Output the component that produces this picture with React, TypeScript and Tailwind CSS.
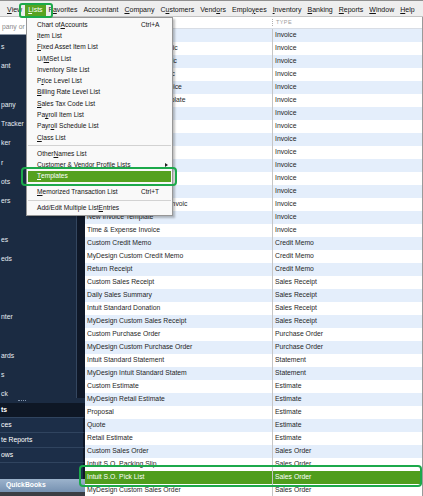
import React from "react";

// mnemonic label: underline one char like a Windows menu
function Mn({ t, u }: { t: string; u?: number }) {
  if (u === undefined || u < 0) return <>{t}</>;
  return (
    <>
      {t.slice(0, u)}
      <span className="underline decoration-[0.5px] underline-offset-[1px]">{t[u]}</span>
      {t.slice(u + 1)}
    </>
  );
}

const menubar: [string, number][] = [
  ["View", 0],
  ["Lists", 0],
  ["Favorites", 1],
  ["Accountant", -1],
  ["Company", 0],
  ["Customers", 1],
  ["Vendors", 4],
  ["Employees", 5],
  ["Inventory", 0],
  ["Banking", 0],
  ["Reports", 0],
  ["Window", 0],
  ["Help", 0],
];

type MenuItem =
  | { t: string; u?: number; k?: string; sub?: boolean; hl?: boolean }
  | "sep";

const listsMenu: MenuItem[] = [
  { t: "Chart of Accounts", u: 9, k: "Ctrl+A" },
  { t: "Item List", u: 0 },
  { t: "Fixed Asset Item List", u: 0 },
  { t: "U/M Set List", u: 2 },
  { t: "Inventory Site List" },
  { t: "Price Level List", u: 1 },
  { t: "Billing Rate Level List", u: 0 },
  { t: "Sales Tax Code List", u: 0 },
  { t: "Payroll Item List", u: 2 },
  { t: "Payroll Schedule List", u: 4 },
  { t: "Class List", u: 0 },
  "sep",
  { t: "Other Names List", u: 6 },
  { t: "Customer & Vendor Profile Lists", sub: true },
  { t: "Templates", u: 0, hl: true },
  "sep",
  { t: "Memorized Transaction List", u: 0, k: "Ctrl+T" },
  "sep",
  { t: "Add/Edit Multiple List Entries", u: 23 },
];

const rows: [string, string][] = [
  ["Finance Charge", "Invoice"],
  ["MyDesign Intuit Product Basic", "Invoice"],
  ["MyDesign Intuit Service Basic", "Invoice"],
  ["MyDesign Professional Basic", "Invoice"],
  ["MyDesign Intuit Service Invoice", "Invoice"],
  ["MyDesign New Invoice Template", "Invoice"],
  ["Intuit Product Invoice", "Invoice"],
  ["Intuit Professional Invoice", "Invoice"],
  ["Intuit Service Invoice", "Invoice"],
  ["Intuit Packing Slip", "Invoice"],
  ["Fixed Fee Invoice", "Invoice"],
  ["Progress Invoice", "Invoice"],
  ["Intuit Standard Invoice", "Invoice"],
  ["MyDesign Custom Product Invoic", "Invoice"],
  ["New Invoice Template", "Invoice"],
  ["Time & Expense Invoice", "Invoice"],
  ["Custom Credit Memo", "Credit Memo"],
  ["MyDesign Custom Credit Memo", "Credit Memo"],
  ["Return Receipt", "Credit Memo"],
  ["Custom Sales Receipt", "Sales Receipt"],
  ["Daily Sales Summary", "Sales Receipt"],
  ["Intuit Standard Donation", "Sales Receipt"],
  ["MyDesign Custom Sales Receipt", "Sales Receipt"],
  ["Custom Purchase Order", "Purchase Order"],
  ["MyDesign Custom Purchase Order", "Purchase Order"],
  ["Intuit Standard Statement", "Statement"],
  ["MyDesign Intuit Standard Statem", "Statement"],
  ["Custom Estimate", "Estimate"],
  ["MyDesign Retail Estimate", "Estimate"],
  ["Proposal", "Estimate"],
  ["Quote", "Estimate"],
  ["Retail Estimate", "Estimate"],
  ["Custom Sales Order", "Sales Order"],
  ["Intuit S.O. Packing Slip", "Sales Order"],
  ["Intuit S.O. Pick List", "Sales Order"],
  ["MyDesign Custom Sales Order", "Sales Order"],
];

const navLabels = [
  "s", "ant", "", "pany", "Tracker", "ker", "r", "ots", "ers", "",
  "es", "eds", "", "", "nter", "", "ards", "s", "ck",
];

function MenuBar() {
  return (
    <div className="h-[17px] bg-[#eeeeee] border-t border-t-[#8f8f8f] border-b border-b-[#c4c4c4] flex items-end pl-[4px] text-[7px] text-[#141414]">
      {menubar.map(([t, u]) => (
        <div
          key={t}
          className={`px-[3px] h-[12px] flex items-center whitespace-nowrap ${
            t === "Lists" ? "bg-[#58a322] text-white" : ""
          }`}
        >
          <Mn t={t} u={u} />
        </div>
      ))}
    </div>
  );
}

function Sidebar() {
  return (
    <div className="w-[85px] shrink-0 flex flex-col bg-[#1b2b42] text-[6.8px]">
      {/* search box */}
      <div className="h-[18px] bg-white flex items-center pl-[2px] pt-[4px] text-[#8a8a8a] border-b border-[#8d99a8]">
        pany or
      </div>

      {/* icon bar */}
      <div className="h-[363px] flex">
        <div className="w-[77px] pt-[2.35px] overflow-hidden border-r border-[#34465f]">
          {navLabels.map((t, i) => (
            <div key={i} className="h-[19.3px] flex items-center pl-[1px] text-[#e6ebf2]">
              {t}
            </div>
          ))}
        </div>
        <div className="flex-1 bg-[#0f1828]" />
      </div>

      {/* splitter handle */}
      <div className="h-[5px] flex items-center bg-[#1b2b42]">
        <div className="ml-[18px] w-[8px] border-t border-dotted border-[#8193ab]" />
      </div>

      {/* bottom sections */}
      {[
        ["ts", true],
        ["ces", false],
        ["te Reports", false],
        ["ows", false],
      ].map(([t, sel]) => (
        <div
          key={t as string}
          className={`h-[15px] flex items-center pl-[1px] text-white border-b border-[#30445f] border-r-2 border-r-[#0f1828] ${
            sel ? "bg-[#0e1725] font-bold" : "bg-[#1c2e48]"
          }`}
        >
          {t as string}
        </div>
      ))}
      <div className="h-[16px] bg-[#1c2e48] border-r-2 border-r-[#0f1828]" />
      <div className="h-[13px] flex items-center pl-[6px] font-bold text-white bg-gradient-to-b from-[#9cb3cc] to-[#7691b1]">
        QuickBooks
      </div>
      <div className="h-[4px] bg-[#3b3e44]" />
    </div>
  );
}

function TemplateList() {
  return (
    <div className="flex-1 flex flex-col overflow-hidden border-r border-[#9a9a9a]">
      <div className="h-[12px] shrink-0 flex bg-white border-b border-[#d8dde5]">
        <div className="w-[187px]" />
        <div className="flex items-center">
          <span className="h-[7px] border-l border-dotted border-[#b0b0b0] mr-[3px]" />
          <span className="text-[5.5px] tracking-[0.4px] text-[#9c9c9c]">TYPE</span>
        </div>
      </div>
      {rows.map(([name, type], i) => {
        const sel = i === 34;
        return (
          <div
            key={i}
            className={`h-[13px] shrink-0 flex text-[6.8px] ${
              sel
                ? "bg-[#4f9d1c] text-white"
                : i % 2 === 0
                ? "bg-[#e4eefb] text-[#1f1f1f]"
                : "bg-white text-[#1f1f1f]"
            }`}
          >
            <div className="w-[187px] pl-[2px] flex items-center whitespace-nowrap overflow-hidden">
              {name}
            </div>
            <div className="flex-1 pl-[2px] flex items-center border-l border-[#c6c6c6] whitespace-nowrap">
              {type}
            </div>
          </div>
        );
      })}
    </div>
  );
}

function ListsMenu() {
  return (
    <div className="absolute left-[26px] top-[17px] w-[147px] h-[199px] bg-[#f9f9f9] border border-[#979797] shadow-[2px_2px_2px_rgba(0,0,0,0.25)] pt-[1px] text-[6.6px] text-[#141414]">
      {listsMenu.map((m, i) =>
        m === "sep" ? (
          <div key={i} className="h-[4.7px] flex items-center px-[1px]">
            <div className="h-px w-full bg-[#d2d2d2]" />
          </div>
        ) : (
          <div
            key={i}
            className={`h-[11.3px] mx-[1px] pl-[9px] flex items-center whitespace-nowrap ${
              m.hl ? "bg-[#55a11f] text-white" : ""
            }`}
          >
            <Mn t={m.t} u={m.u} />
            {m.k && <span className="ml-auto w-[30px]">{m.k}</span>}
            {m.sub && (
              <span className="ml-auto mr-[3px] w-0 h-0 border-y-[2px] border-y-transparent border-l-[3px] border-l-[#222]" />
            )}
          </div>
        )
      )}
    </div>
  );
}

export default function App() {
  return (
    <div className="relative w-[423px] h-[496px] overflow-hidden bg-white font-['Liberation_Sans',Arial,sans-serif]">
      <MenuBar />
      <div className="flex h-[479px]">
        <Sidebar />
        <TemplateList />
      </div>

      <ListsMenu />

      {/* green callout boxes */}
      <div className="absolute left-[19px] top-[3px] w-[34px] h-[15px] rounded-[3px] border-[2.5px] border-[#1ca94b]" />
      <div className="absolute left-[21px] top-[167px] w-[156px] h-[19px] rounded-[4px] border-[2.5px] border-[#1ca94b]" />
      <div className="absolute left-[79px] top-[465px] w-[343px] h-[22px] rounded-[4px] border-[2.5px] border-[#1ca94b]" />
    </div>
  );
}
